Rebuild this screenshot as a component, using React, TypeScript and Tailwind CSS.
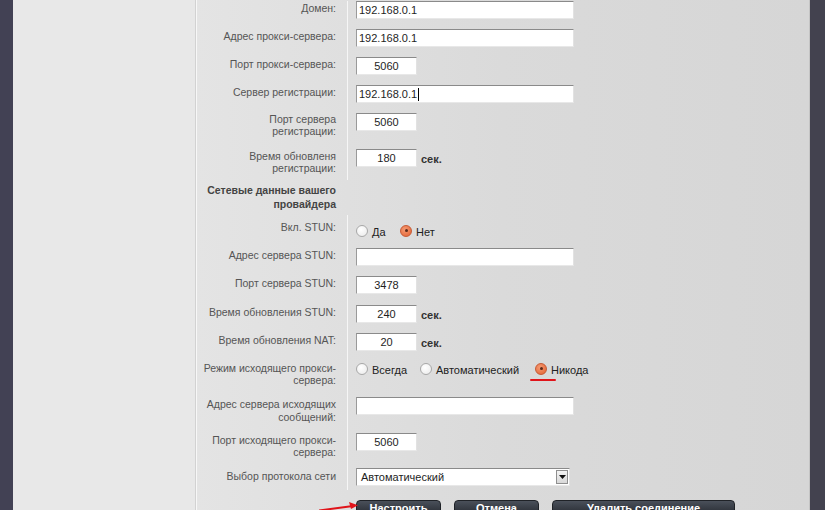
import React from "react";

const font = { fontFamily: '"Liberation Sans", Arial, sans-serif' };

function TextBox({ value, wide = true, caret = false }: { value: string; wide?: boolean; caret?: boolean }) {
  return (
    <div
      className={`h-[18px] bg-white border-t border-l border-t-[#8a8a8a] border-l-[#9a9a9a] border-r border-b border-r-[#e2e2e2] border-b-[#e8e8e8] flex items-center text-[11px] text-[#1e1e1e] ${wide ? "w-[218px] pl-[2px]" : "w-[61px] justify-center"}`}
    >
      <span>{value}</span>
      {caret && <span className="w-px h-[13px] bg-black ml-px" />}
    </div>
  );
}

function Radio({ checked, label }: { checked: boolean; label: string }) {
  return (
    <div className="flex items-center">
      {checked ? (
        <span className="w-[12px] h-[12px] rounded-full bg-[radial-gradient(circle_at_40%_35%,#f59a73,#e2602f)] border border-[#c65a35] flex items-center justify-center">
          <span className="w-[3px] h-[3px] rounded-full bg-[#5a2a1a]" />
        </span>
      ) : (
        <span className="w-[12px] h-[12px] rounded-full bg-[radial-gradient(circle_at_40%_35%,#ffffff,#e9e9e9)] border border-[#a8a8a8]" />
      )}
      <span className="ml-[4px] text-[11px] text-[#222] mt-[3px]">{label}</span>
    </div>
  );
}

function Row({ h, label, children, lpt = 0, cpt = 0, leading = "leading-[14px]" }: { h: number; label: React.ReactNode; children?: React.ReactNode; lpt?: number; cpt?: number; leading?: string }) {
  return (
    <div className="flex" style={{ height: h }}>
      <div className={`w-[150px] shrink-0 pr-[11px] text-right text-[10.5px] text-[#555] ${leading}`} style={{ paddingTop: lpt }}>
        {label}
      </div>
      <div className="border-l border-l-[#f6f6f6] pl-[8px] flex-1" style={{ paddingTop: cpt }}>
        {children}
      </div>
    </div>
  );
}

function Sec() {
  return <span className="ml-[4px] text-[11px] font-bold text-[#333] mt-[2px]">сек.</span>;
}

function Btn({ w, text }: { w: number; text: string }) {
  return (
    <div
      className="h-[16px] rounded-t-[4px] bg-gradient-to-b from-[#4a505a] to-[#262a31] border border-[#1f2227] text-white text-[11px] font-bold flex justify-center pt-[1px] leading-[13px] overflow-hidden whitespace-nowrap"
      style={{ width: w }}
    >
      {text}
    </div>
  );
}

export default function App() {
  return (
    <div className="w-[825px] h-[510px] overflow-hidden flex bg-[#424154]" style={font}>
      <div className="w-[13px] shrink-0 bg-[#424154]" />
      <div className="w-[183px] shrink-0 bg-[#e8e8e8] border-r border-r-[#d2d2d2]" />
      <div className="w-[614px] shrink-0 relative border-l border-l-[#f7f7f7] border-r border-r-[#c4c4c4] bg-gradient-to-r from-[#e4e4e4] via-[#dadada] to-[#d6d6d6]">
        <div className="pt-[1px]">
          <Row h={28} label="Домен:">
            <TextBox value="192.168.0.1" />
          </Row>
          <Row h={28} label="Адрес прокси-сервера:">
            <TextBox value="192.168.0.1" />
          </Row>
          <Row h={28} label="Порт прокси-сервера:">
            <TextBox value="5060" wide={false} />
          </Row>
          <Row h={28} label="Сервер регистрации:">
            <TextBox value="192.168.0.1" caret />
          </Row>
          <Row h={36} label={<>Порт сервера<br />регистрации:</>} leading="leading-[12px]">
            <TextBox value="5060" wide={false} />
          </Row>
          <Row h={31} label={<>Время обновленя<br />регистрации:</>} leading="leading-[12px]" lpt={1}>
            <div className="flex items-start">
              <TextBox value="180" wide={false} />
              <Sec />
            </div>
          </Row>
          <div className="h-[35px] flex">
            <div className="w-[150px] pr-[11px] pt-[3px] text-right text-[10.5px] font-bold text-[#444] leading-[14px]">
              Сетевые данные вашего<br />провайдера
            </div>
          </div>
          <Row h={33} label="Вкл. STUN:" lpt={5} cpt={6}>
            <div className="flex items-center">
              <div className="w-[44px]"><Radio checked={false} label="Да" /></div>
              <Radio checked label="Нет" />
            </div>
          </Row>
          <Row h={28} label="Адрес сервера STUN:">
            <TextBox value="" />
          </Row>
          <Row h={29} label="Порт сервера STUN:">
            <TextBox value="3478" wide={false} />
          </Row>
          <Row h={28} label="Время обновления STUN:">
            <div className="flex items-start">
              <TextBox value="240" wide={false} />
              <Sec />
            </div>
          </Row>
          <Row h={28} label="Время обновления NAT:">
            <div className="flex items-start">
              <TextBox value="20" wide={false} />
              <Sec />
            </div>
          </Row>
          <Row h={36} label={<>Режим исходящего прокси-<br />сервера:</>} leading="leading-[12px]" lpt={1}>
            <div className="flex items-center relative -mt-[2px]">
              <div className="w-[64px]"><Radio checked={false} label="Всегда" /></div>
              <div className="w-[115px]"><Radio checked={false} label="Автоматический" /></div>
              <Radio checked label="Никода" />
              <span className="absolute left-[174px] top-[20px] w-[26px] h-[2px] rounded-full bg-[#e0141a]" />
            </div>
          </Row>
          <Row h={36} label={<>Адрес сервера исходящих<br />сообщений:</>} leading="leading-[13px]" lpt={1}>
            <TextBox value="" />
          </Row>
          <Row h={35} label={<>Порт исходящего прокси-<br />сервера:</>} leading="leading-[12px]" lpt={1}>
            <TextBox value="5060" wide={false} />
          </Row>
          <Row h={22} label="Выбор протокола сети" lpt={1}>
            <div className="w-[214px] h-[18px] bg-white border-t border-l border-t-[#8a8a8a] border-l-[#9a9a9a] border-r border-b border-r-[#e2e2e2] border-b-[#e8e8e8] flex items-center justify-between">
              <span className="pl-[4px] text-[11px] text-[#1e1e1e] mt-px">Автоматический</span>
              <span className="w-[12px] h-[14px] mr-[1px] bg-gradient-to-b from-[#f4f4f4] to-[#d8d8d8] border border-[#8f8f8f] flex items-center justify-center">
                <svg width="7" height="4" viewBox="0 0 7 4"><path d="M0 0h7L3.5 4z" fill="#111" /></svg>
              </span>
            </div>
          </Row>
          <div className="flex pl-[159px] pt-[10px] gap-[13px]">
            <Btn w={85} text="Настроить" />
            <Btn w={85} text="Отмена" />
            <Btn w={183} text="Удалить соединение" />
          </div>
        </div>
        <svg className="absolute left-[122px] top-[497px]" width="40" height="14" viewBox="0 0 40 14">
          <path d="M0 13.5 L34 9" stroke="#e0141a" strokeWidth="2" fill="none" />
          <path d="M39 8.3 L30 5 L32 12 Z" fill="#e0141a" />
        </svg>
      </div>
      <div className="flex-1 bg-[#43424f]" />
    </div>
  );
}
